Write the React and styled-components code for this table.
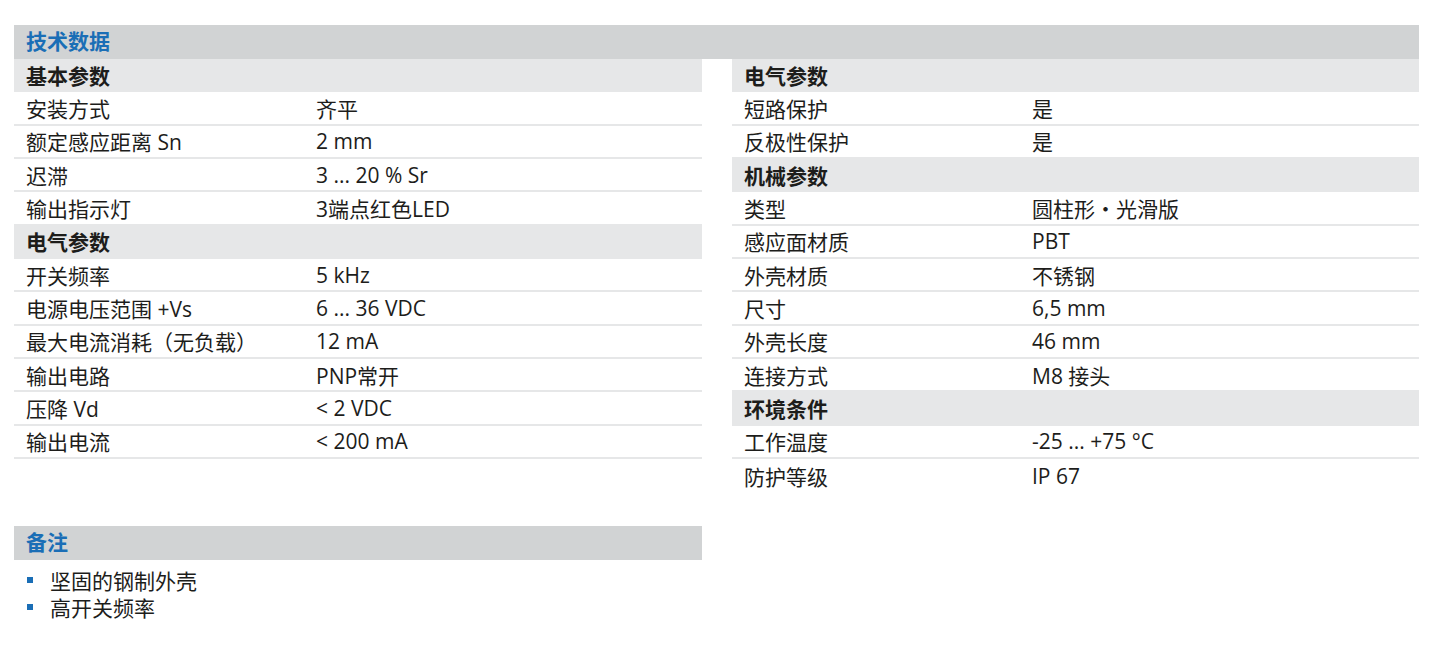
import React from "react";
import styled, { createGlobalStyle } from "styled-components";

const GlobalStyle = createGlobalStyle`
  body {
    margin: 0;
    background: #ffffff;
    font-family: "Open Sans", "Noto Sans CJK SC", sans-serif;
    color: #1d1d1b;
  }
`;

const Page = styled.div`
  width: 1405px;
  padding: 25px 0 0 14px;
`;

const TitleBar = styled.div`
  height: 34px;
  box-sizing: border-box;
  display: flex;
  align-items: center;
  padding: 0 0 4px 12px;
  background: #d1d3d4;
  color: #1a6eb6;
  font-size: 21px;
  font-weight: 700;
`;

const Columns = styled.div`
  display: flex;
  align-items: flex-start;
  gap: 30px;
`;

const Column = styled.div`
  width: ${p => p.width}px;
  display: flex;
  flex-direction: column;
`;

const SubHeader = styled.div`
  height: 33.33px;
  box-sizing: border-box;
  display: flex;
  align-items: center;
  padding: 0 0 2px 12px;
  background: #e6e7e8;
  font-size: 21px;
  font-weight: 700;
  color: #1d1d1b;
`;

const Row = styled.div`
  height: 33.33px;
  box-sizing: border-box;
  display: flex;
  align-items: center;
  border-bottom: ${p => (p.last ? "none" : "2px solid #e6e7e8")};
  font-size: 21px;
`;

const Label = styled.div`
  width: ${p => p.width}px;
  padding-left: 12px;
  box-sizing: border-box;
  white-space: nowrap;
`;

const Value = styled.div`
  white-space: nowrap;
`;

const Notes = styled.div`
  margin-top: 67px;
`;

const NoteBar = styled(TitleBar)`
  width: 688px;
`;

const NoteList = styled.ul`
  list-style: none;
  margin: 0;
  padding: 7px 0 0 13px;
`;

const NoteItem = styled.li`
  display: flex;
  align-items: center;
  height: 27px;
  font-size: 21px;
  &::before {
    content: "";
    width: 6px;
    height: 6px;
    background: #1a6eb6;
    margin-right: 17px;
  }
`;

const leftSections = [
  {
    title: "基本参数",
    rows: [
      ["安装方式", "齐平"],
      ["额定感应距离 Sn", "2 mm"],
      ["迟滞", "3 ... 20 % Sr"],
      ["输出指示灯", "3端点红色LED"]
    ]
  },
  {
    title: "电气参数",
    rows: [
      ["开关频率", "5 kHz"],
      ["电源电压范围 +Vs", "6 ... 36 VDC"],
      ["最大电流消耗（无负载）", "12 mA"],
      ["输出电路", "PNP常开"],
      ["压降 Vd", "< 2 VDC"],
      ["输出电流", "< 200 mA"]
    ]
  }
];

const rightSections = [
  {
    title: "电气参数",
    rows: [
      ["短路保护", "是"],
      ["反极性保护", "是"]
    ]
  },
  {
    title: "机械参数",
    rows: [
      ["类型", "圆柱形・光滑版"],
      ["感应面材质", "PBT"],
      ["外壳材质", "不锈钢"],
      ["尺寸", "6,5 mm"],
      ["外壳长度", "46 mm"],
      ["连接方式", "M8 接头"]
    ]
  },
  {
    title: "环境条件",
    rows: [
      ["工作温度", "-25 ... +75 °C"],
      ["防护等级", "IP 67"]
    ],
    open: true
  }
];

const notes = ["坚固的钢制外壳", "高开关频率"];

function Sections({ sections, labelWidth }) {
  return sections.map(section => (
    <React.Fragment key={section.title + labelWidth}>
      <SubHeader>{section.title}</SubHeader>
      {section.rows.map(([label, value], i) => (
        <Row key={label} last={section.open && i === section.rows.length - 1}>
          <Label width={labelWidth}>{label}</Label>
          <Value>{value}</Value>
        </Row>
      ))}
    </React.Fragment>
  ));
}

export default function App() {
  return (
    <Page>
      <GlobalStyle />
      <TitleBar>技术数据</TitleBar>
      <Columns>
        <Column width={688}>
          <Sections sections={leftSections} labelWidth={302} />
          <Notes>
            <NoteBar>备注</NoteBar>
            <NoteList>
              {notes.map(note => (
                <NoteItem key={note}>{note}</NoteItem>
              ))}
            </NoteList>
          </Notes>
        </Column>
        <Column width={687}>
          <Sections sections={rightSections} labelWidth={300} />
        </Column>
      </Columns>
    </Page>
  );
}
